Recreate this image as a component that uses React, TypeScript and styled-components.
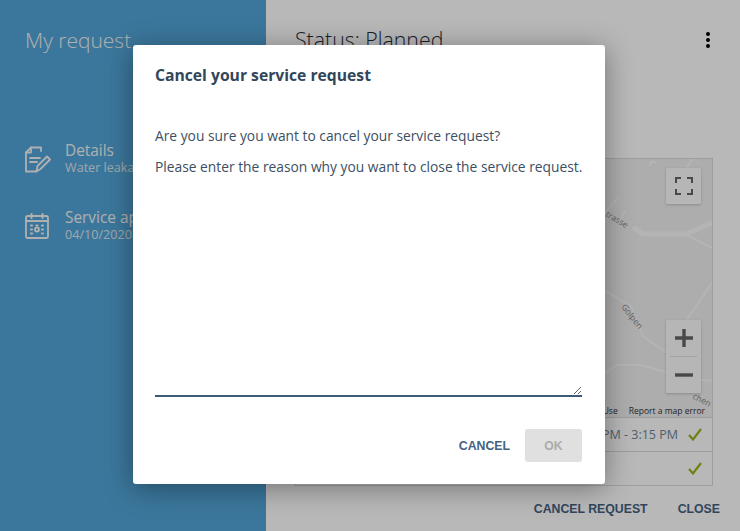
import React from 'react';
import styled, { createGlobalStyle } from 'styled-components';

const GlobalStyle = createGlobalStyle`
  html, body { margin: 0; padding: 0; height: 100%; }
  body { font-family: 'Open Sans', 'Liberation Sans', sans-serif; overflow: hidden; }
`;

const Page = styled.div`
  position: relative;
  width: 740px;
  height: 531px;
  display: grid;
  grid-template-columns: 266px 474px;
  overflow: hidden;
`;

/* left blue panel */
const Sidebar = styled.aside`
  background: #52a5d9;
  color: #f4f4f4;
  padding: 26px 0 0 25px;
`;

const PanelTitle = styled.h1<{ $dark?: boolean }>`
  margin: 0;
  height: 28px;
  font-size: ${(p) => (p.$dark ? '21.3px' : '21px')};
  line-height: 28px;
  font-weight: 300;
  color: ${(p) => (p.$dark ? '#1f2d3a' : '#f4f4f4')};
`;

const NavList = styled.nav`
  margin-top: 85px;
  display: flex;
  flex-direction: column;
  gap: 31px;
`;

const NavItem = styled.div`
  display: flex;
  align-items: center;
  gap: 14px;
  height: 36px;
`;

const NavIcon = styled.div`
  width: 26px;
  flex: none;
  display: flex;
  margin-top: 4px;
`;

const NavText = styled.div`
  white-space: nowrap;
`;

const NavTitle = styled.div`
  font-size: 15.4px;
  line-height: 18px;
  padding-top: 2px;
`;

const NavSub = styled.div`
  font-size: 12.6px;
  line-height: 15px;
  opacity: 0.85;
`;

/* right content */
const Content = styled.main`
  background: #fff;
  display: flex;
  flex-direction: column;
  padding: 26px 27px 0 29px;
  min-width: 0;
`;

const HeaderRow = styled.div`
  display: flex;
  align-items: center;
  justify-content: space-between;
  padding-right: 3px;
`;

const MoreDots = styled.div`
  display: flex;
  flex-direction: column;
  gap: 2px;
  span {
    width: 4px;
    height: 4px;
    border-radius: 50%;
    background: #000;
  }
`;

const MapBox = styled.div`
  position: relative;
  margin-top: 104px;
  height: 260px;
  background: #f0f0f0;
  border: 1px solid #dcdcdc;
  box-sizing: border-box;
  overflow: hidden;
`;

const RoadLayer = styled.svg`
  position: absolute;
  left: 0;
  top: 0;
  width: 418px;
  height: 259px;
`;

const MapControl = styled.div<{ $top: number }>`
  position: absolute;
  right: 11px;
  top: ${(p) => p.$top}px;
  width: 35px;
  background: #fcfcfc;
  box-shadow: 0 1px 3px rgba(0, 0, 0, 0.2);
  border-radius: 1px;
  display: flex;
  flex-direction: column;
  align-items: center;
`;

const ControlCell = styled.div`
  width: 100%;
  height: 36px;
  display: flex;
  align-items: center;
  justify-content: center;
`;

const ControlRule = styled.div`
  width: 27px;
  height: 1px;
  background: #e2e2e2;
`;

const MapFooter = styled.div`
  position: absolute;
  right: 7px;
  bottom: 0;
  display: flex;
  gap: 11px;
  font-size: 8.5px;
  line-height: 12px;
  color: #333;
`;

const ScheduleRow = styled.div`
  height: 33px;
  border: 1px solid #dcdcdc;
  border-top: none;
  display: flex;
  align-items: center;
  justify-content: flex-end;
  gap: 10px;
  padding-right: 10px;
  font-size: 12.5px;
  color: #6d8598;
`;

const FooterBar = styled.div`
  display: flex;
  justify-content: flex-end;
  gap: 30px;
  margin-top: 15px;
  margin-right: -7px;
`;

const TextButton = styled.button`
  border: none;
  background: none;
  padding: 0;
  font-family: 'Liberation Sans', Arial, sans-serif;
  font-size: 12.3px;
  line-height: 16px;
  font-weight: 700;
  color: #44617f;
`;

/* modal */
const Scrim = styled.div`
  position: absolute;
  inset: 0;
  background: rgba(0, 0, 0, 0.28);
  padding: 45px 135px 47px 133px;
  box-sizing: border-box;
  display: flex;
`;

const Dialog = styled.div`
  flex: 1;
  min-width: 0;
  background: #fff;
  border-radius: 3px;
  box-shadow: 0 4px 28px rgba(0, 0, 0, 0.38);
  display: flex;
  flex-direction: column;
  padding: 20px 23px 22px 22px;
  color: #32465a;
`;

const DialogTitle = styled.h2`
  margin: 0 0 41px;
  font-size: 15.7px;
  line-height: 20px;
  font-weight: 700;
`;

const DialogText = styled.p`
  margin: 0 0 11px;
  font-size: 13.8px;
  line-height: 20px;
  color: #3c4f62;
  white-space: nowrap;
`;

const ReasonInput = styled.textarea`
  display: block;
  flex: 1;
  width: 100%;
  box-sizing: border-box;
  border: none;
  border-bottom: 2px solid #3d5a78;
  outline: none;
  resize: vertical;
  margin-top: 7px;
`;

const DialogActions = styled.div`
  display: flex;
  justify-content: flex-end;
  align-items: center;
  gap: 15px;
  margin-top: 32px;
`;

const OkButton = styled.button`
  width: 57px;
  height: 33px;
  border: none;
  border-radius: 3px;
  background: #e0e0e0;
  color: #ababab;
  font-family: 'Liberation Sans', Arial, sans-serif;
  font-size: 12.3px;
  font-weight: 700;
`;

const DetailsIcon = () => (
  <svg width="26" height="28" viewBox="0 0 26 28" fill="none" stroke="#f4f4f4" strokeWidth="1.8" strokeLinejoin="round" strokeLinecap="round">
    <path d="M16 6V2.5H6L1 7.5V26.5H11" />
    <path d="M6 2.5V7.5H1" />
    <path d="M5 13H15M5 17H12" />
    <path d="M11.5 26.5L12.5 21L22 11.5L25 14.5L15.5 24Z" />
  </svg>
);

const CalendarIcon = () => (
  <svg width="24" height="26" viewBox="0 0 24 26" fill="none" stroke="#f4f4f4" strokeWidth="1.8" strokeLinecap="round">
    <rect x="1" y="3" width="22" height="22" rx="1.5" />
    <path d="M6.5 1V5M17.5 1V5M1 8H23" strokeWidth="2" />
    <circle cx="12" cy="16.5" r="2" />
    <path d="M6 12.5h1M11.5 12.5h1M17 12.5h1M6 16.5h1M17 16.5h1M6 20.5h1M17 20.5h1" strokeWidth="2.2" />
  </svg>
);

const Check = () => (
  <svg width="14" height="13" viewBox="0 0 14 13" fill="none" stroke="#9bb31a" strokeWidth="2.2">
    <path d="M1 7L5 11.5L13 1" />
  </svg>
);

const App = () => (
  <>
    <GlobalStyle />
    <Page>
      <Sidebar>
        <PanelTitle>My request</PanelTitle>
        <NavList>
          <NavItem>
            <NavIcon>
              <DetailsIcon />
            </NavIcon>
            <NavText>
              <NavTitle>Details</NavTitle>
              <NavSub>Water leakage</NavSub>
            </NavText>
          </NavItem>
          <NavItem>
            <NavIcon>
              <CalendarIcon />
            </NavIcon>
            <NavText>
              <NavTitle>Service appointment</NavTitle>
              <NavSub>04/10/2020</NavSub>
            </NavText>
          </NavItem>
        </NavList>
      </Sidebar>

      <Content>
        <HeaderRow>
          <PanelTitle $dark>Status: Planned</PanelTitle>
          <MoreDots>
            <span />
            <span />
            <span />
          </MoreDots>
        </HeaderRow>

        <MapBox>
          <RoadLayer viewBox="295 158 418 259">
            <g fill="none" stroke="#fafafa" strokeWidth="2">
              <path d="M632 226L642 233H685L713 221" strokeWidth="5" />
              <path d="M686 234L713 248" />
              <path d="M648 165L651 160L656 162M685 167L692 158" />
              <path d="M605 210L618 196M617 222L624 210" />
              <path d="M604 290L630 305L642 335L666 352" />
              <path d="M604 372L616 364H640L690 378L713 380" />
              <path d="M685 320L713 279" />
            </g>
            <g fontFamily="'Open Sans', sans-serif" fontSize="8.5" fill="#888">
              <text x="604" y="215" transform="rotate(30 604 215)">trasse</text>
              <text x="620" y="306" transform="rotate(52 620 306)">Golpen</text>
              <text x="691" y="397" transform="rotate(28 691 397)">chen</text>
            </g>
          </RoadLayer>
          <MapControl $top={9}>
            <ControlCell>
              <svg width="18" height="18" viewBox="0 0 18 18" fill="none" stroke="#666" strokeWidth="2">
                <path d="M1 6V1H6M12 1H17V6M17 12V17H12M6 17H1V12" />
              </svg>
            </ControlCell>
          </MapControl>
          <MapControl $top={161}>
            <ControlCell>
              <svg width="18" height="18" viewBox="0 0 18 18" fill="none" stroke="#666" strokeWidth="3.4">
                <path d="M0 9H18M9 0V18" />
              </svg>
            </ControlCell>
            <ControlRule />
            <ControlCell>
              <svg width="18" height="18" viewBox="0 0 18 18" fill="none" stroke="#666" strokeWidth="3.4">
                <path d="M0 9H18" />
              </svg>
            </ControlCell>
          </MapControl>
          <MapFooter>
            <span>Terms of Use</span>
            <span>Report a map error</span>
          </MapFooter>
        </MapBox>

        <ScheduleRow>
          <span>12:15 PM - 3:15 PM</span>
          <Check />
        </ScheduleRow>
        <ScheduleRow>
          <Check />
        </ScheduleRow>

        <FooterBar>
          <TextButton>CANCEL REQUEST</TextButton>
          <TextButton>CLOSE</TextButton>
        </FooterBar>
      </Content>

      <Scrim>
        <Dialog>
          <DialogTitle>Cancel your service request</DialogTitle>
          <DialogText>Are you sure you want to cancel your service request?</DialogText>
          <DialogText>Please enter the reason why you want to close the service request.</DialogText>
          <ReasonInput />
          <DialogActions>
            <TextButton>CANCEL</TextButton>
            <OkButton>OK</OkButton>
          </DialogActions>
        </Dialog>
      </Scrim>
    </Page>
  </>
);

export default App;
